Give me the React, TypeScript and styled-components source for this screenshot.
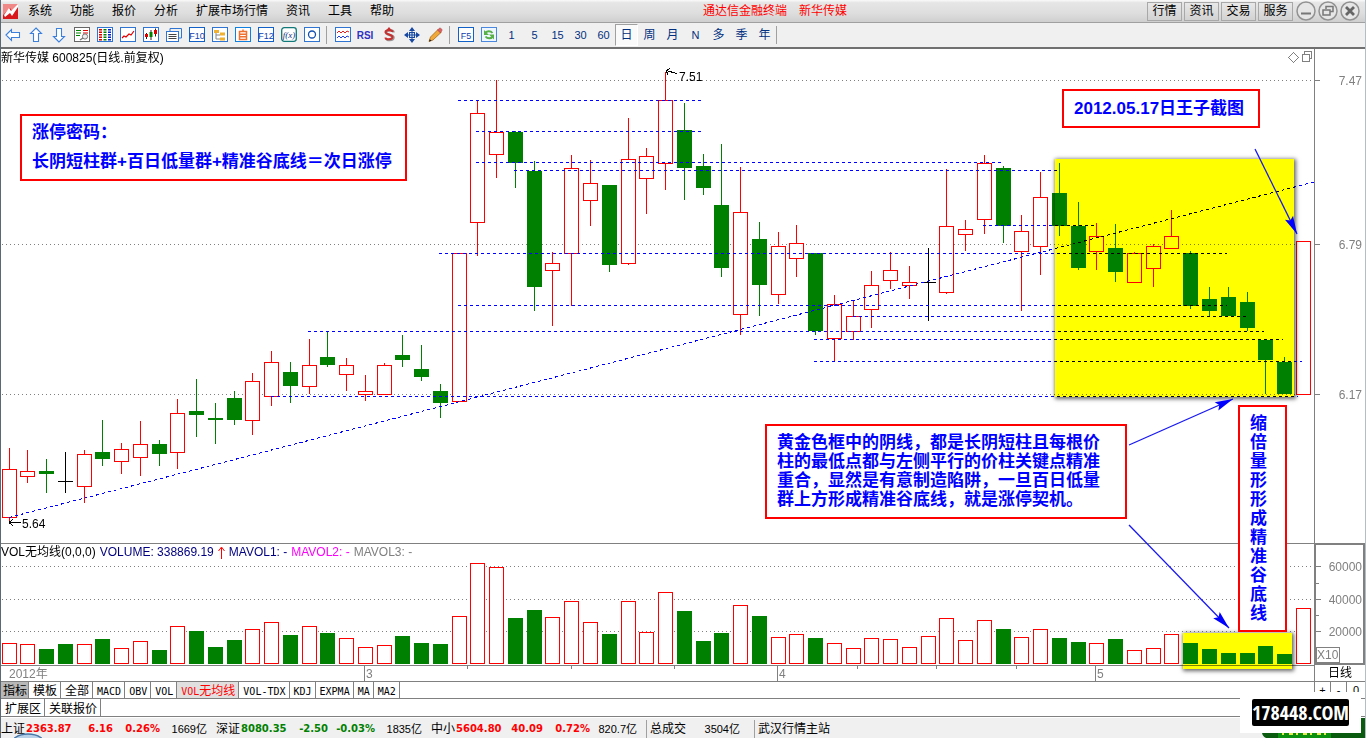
import React from "react";
import styled, { createGlobalStyle, css } from "styled-components";

const GRAY = "#808080";
const RED = "#ff0000";
const GREEN = "#008000";
const BLUE = "#0000ff";
const NAVY = "#003080";
const SANS = '"Liberation Sans", "Noto Sans CJK SC", sans-serif';

const GlobalStyle = createGlobalStyle`
  * { box-sizing: border-box; }
  body { margin: 0; background: #fff; font: 12px/16px ${SANS}; color: #000; }
  button { font: inherit; color: inherit; background: none; border: 0; padding: 0; margin: 0; white-space: nowrap; }
  svg { display: block; }
`;

/* ---------- data ---------- */

type Kind = "R" | "G" | "K";
/* x, high, body top, body bottom, low, kind, volume top */
type Bar = [number, number, number, number, number, Kind, number];

const BARS: Bar[] = [
  [9, 448, 469, 517, 521, "R", 643],
  [27, 450, 471, 476, 483, "R", 644],
  [46, 459, 471, 474, 493, "G", 649],
  [65, 452, 481, 482, 493, "K", 644],
  [84, 450, 454, 486, 503, "R", 644],
  [102, 420, 452, 459, 466, "G", 639],
  [121, 443, 449, 461, 474, "R", 648],
  [140, 421, 444, 457, 476, "R", 641],
  [159, 440, 444, 454, 466, "G", 650],
  [177, 399, 413, 452, 469, "R", 626],
  [196, 379, 411, 415, 437, "G", 631],
  [215, 403, 418, 420, 444, "G", 647],
  [234, 391, 398, 420, 425, "G", 640],
  [252, 373, 381, 420, 435, "R", 629],
  [271, 351, 362, 396, 406, "R", 622],
  [290, 362, 372, 386, 403, "G", 635],
  [309, 339, 365, 386, 394, "R", 626],
  [327, 331, 357, 365, 367, "G", 633],
  [346, 358, 365, 374, 391, "R", 638],
  [365, 375, 391, 394, 401, "R", 647],
  [384, 363, 365, 394, 395, "R", 645],
  [402, 335, 355, 360, 367, "G", 636],
  [421, 345, 369, 377, 381, "G", 643],
  [440, 384, 391, 403, 418, "G", 644],
  [459, 253, 253, 401, 402, "R", 616],
  [477, 101, 113, 222, 256, "R", 563],
  [496, 80, 132, 154, 178, "R", 567],
  [515, 131, 132, 163, 188, "G", 618],
  [534, 161, 171, 287, 311, "G", 610],
  [552, 252, 263, 270, 326, "R", 617],
  [571, 155, 168, 253, 306, "R", 601],
  [590, 160, 183, 200, 226, "R", 622],
  [609, 185, 185, 265, 272, "G", 634],
  [628, 118, 159, 263, 265, "R", 601],
  [646, 148, 156, 178, 214, "R", 632],
  [665, 72, 100, 163, 190, "R", 592],
  [684, 103, 130, 168, 200, "G", 611],
  [703, 154, 166, 188, 195, "G", 641],
  [721, 144, 205, 268, 277, "G", 633],
  [740, 167, 212, 314, 335, "R", 605],
  [759, 222, 239, 285, 316, "G", 616],
  [778, 232, 246, 294, 304, "R", 637],
  [796, 225, 243, 258, 277, "R", 634],
  [815, 253, 253, 331, 335, "G", 638],
  [834, 295, 304, 338, 361, "R", 643],
  [853, 300, 316, 331, 340, "R", 648],
  [871, 271, 285, 309, 328, "R", 638],
  [890, 252, 270, 280, 289, "R", 639],
  [909, 266, 282, 285, 299, "R", 647],
  [928, 248, 282, 283, 321, "K", 636],
  [946, 169, 226, 292, 294, "R", 618],
  [965, 220, 229, 234, 251, "R", 640],
  [984, 155, 163, 219, 234, "R", 620],
  [1003, 166, 168, 226, 243, "G", 629],
  [1021, 215, 231, 251, 311, "R", 637],
  [1040, 172, 197, 246, 275, "R", 629],
  [1059, 163, 193, 226, 236, "G", 638],
  [1078, 202, 226, 268, 270, "G", 642],
  [1096, 223, 236, 251, 270, "R", 643],
  [1115, 224, 248, 272, 282, "G", 639],
  [1134, 252, 253, 282, 283, "R", 650],
  [1153, 244, 246, 268, 287, "R", 648],
  [1171, 210, 236, 248, 249, "R", 634],
  [1190, 251, 253, 306, 309, "G", 643],
  [1209, 287, 299, 311, 316, "G", 649],
  [1228, 287, 297, 316, 316, "G", 653],
  [1247, 292, 302, 328, 331, "G", 653],
  [1265, 340, 340, 360, 394, "G", 646],
  [1284, 357, 362, 394, 394, "G", 654],
  [1303, 241, 241, 394, 395, "R", 608],
];

/* y, x from, x to */
const LEVELS: [number, number, number][] = [
  [100, 458, 702], [131, 476, 702], [162, 476, 1001], [170, 514, 1057],
  [225, 983, 1094], [253, 439, 1227], [305, 458, 1227], [316, 853, 1246],
  [331, 308, 1264], [339, 814, 1283], [361, 814, 1302], [396, 271, 1298],
];

const MENUS = ["系统", "功能", "报价", "分析", "扩展市场行情", "资讯", "工具", "帮助"];
const LINKS = ["行情", "资讯", "交易", "服务"];
const PERIODS = ["1", "5", "15", "30", "60", "日", "周", "月", "N", "多", "季", "年"];
const INDICATORS = ["MACD", "OBV", "VOL", "VOL无均线", "VOL-TDX", "KDJ", "EXPMA", "MA", "MA2"];
const QUOTES = [
  { name: "上证", price: "2363.87", change: "6.16", pct: "0.26%", amount: "1669亿", up: true },
  { name: "深证", price: "8080.35", change: "-2.50", pct: "-0.03%", amount: "1835亿", up: false },
  { name: "中小", price: "5604.80", change: "40.09", pct: "0.72%", amount: "820.7亿", up: true },
];

/* ---------- window chrome ---------- */

const Window = styled.div`
  position: relative;
  min-height: 100vh;
  display: flex;
  flex-direction: column;
  overflow: hidden;
  background: #fff;
  border-left: 1px solid #5b6876;
  border-right: 1px solid #b4bcc8;
`;

const MenuBar = styled.header`
  display: flex;
  align-items: center;
  height: 23px;
  background: linear-gradient(#fafafa, #e6e6e6 12%, #dedede 60%, #cfcfcf);
  border-bottom: 1px solid #a0a0a0;
`;

const MenuList = styled.nav`
  display: flex;
  align-items: center;
  padding-left: 1px;
`;

const MenuItem = styled.button`
  padding: 0 9px;
  line-height: 22px;
`;

const Caption = styled.h1`
  flex: 1;
  display: flex;
  justify-content: center;
  gap: 12px;
  margin: 0;
  font-size: 12px;
  font-weight: 400;
  color: ${RED};
`;

const LinkList = styled.div`
  display: flex;
  gap: 2px;
`;

const LinkButton = styled.button`
  width: 35px;
  height: 19px;
  line-height: 16px;
  border: 1px solid #a8a8a8;
  background: linear-gradient(#e8e8e8, #d2d2d2);
`;

const WindowButtons = styled.div`
  display: flex;
  gap: 2px;
  padding: 0 5px 0 3px;
`;

const ToolBar = styled.div`
  display: flex;
  align-items: center;
  height: 26px;
  background: #f0f0f0;
  border-bottom: 2px solid #707070;
`;

const ToolButton = styled.button<{ $on?: boolean }>`
  width: 23px;
  height: 22px;
  display: grid;
  place-items: center;
  color: ${NAVY};
  font-size: 11px;
  ${(p) =>
    p.$on &&
    css`
      background: #fafafa;
      border: 1px solid;
      border-color: #a0a0a0 #fff #fff #a0a0a0;
    `}
`;

const PeriodButton = styled(ToolButton)`
  font-size: 12px;
`;

const ToolSeparator = styled.i`
  width: 1px;
  height: 18px;
  margin: 0 4px 0 3px;
  background: #a0a0a0;
`;

const ToolEnd = styled(ToolSeparator)`
  margin: 0;
`;

/* ---------- chart ---------- */

const ChartArea = styled.main`
  position: relative;
  isolation: isolate;
  display: grid;
  grid-template-columns: minmax(0, 1fr) 51px;
  background: #fff;
`;

const Pane = styled.section<{ $height: number; $ruled?: boolean }>`
  display: grid;
  height: ${(p) => p.$height}px;
  overflow: hidden;
  border-top: ${(p) => (p.$ruled ? `1px solid ${GRAY}` : "0")};
  & > * {
    grid-area: 1 / 1;
    min-width: 0;
  }
`;

const Drawing = styled.svg`
  width: 100%;
  height: 100%;
  shape-rendering: crispEdges;
  font: 12px ${SANS};
`;

const PaneTitle = styled.h2<{ $height: number }>`
  display: flex;
  align-items: center;
  gap: 4px;
  height: ${(p) => p.$height}px;
  margin: 0;
  font-size: 12px;
  font-weight: 400;
  white-space: pre;
  z-index: 1;
`;

const Series = styled.span<{ $color: string }>`
  color: ${(p) => p.$color};
`;

const AxisPane = styled(Pane)`
  border-left: 1px solid ${GRAY};
`;

const VolumeAxis = styled(Pane)`
  border: 2px solid ${GRAY};
`;

const Factor = styled.span`
  align-self: end;
  justify-self: start;
  width: 24px;
  line-height: 14px;
  border: 1px solid ${GRAY};
  color: ${GRAY};
`;

const PeriodCell = styled.div`
  height: 16px;
  border-left: 1px solid ${GRAY};
  text-align: center;
`;

const Highlight = styled.div<{ $x: number; $y: number; $w: number; $h: number }>`
  position: absolute;
  left: ${(p) => p.$x}px;
  top: ${(p) => p.$y}px;
  width: ${(p) => p.$w}px;
  height: ${(p) => p.$h}px;
  background: #ff0;
  box-shadow: 1px 1px 4px 1px rgba(0, 0, 0, 0.6);
  mix-blend-mode: multiply;
`;

const Note = styled.p<{ $x: number; $y: number; $w: number; $leading: number; $pad: string }>`
  position: absolute;
  left: ${(p) => p.$x}px;
  top: ${(p) => p.$y}px;
  width: ${(p) => p.$w}px;
  margin: 0;
  padding: ${(p) => p.$pad};
  border: 2px solid ${RED};
  background: #fff;
  color: ${BLUE};
  font-size: 17px;
  font-weight: 700;
  line-height: ${(p) => p.$leading}px;
  white-space: nowrap;
  z-index: 2;
`;

const ColumnNote = styled(Note)`
  white-space: normal;
`;

const Arrows = styled.svg`
  position: absolute;
  inset: 0;
  width: 100%;
  height: 100%;
  z-index: 3;
  pointer-events: none;
`;

/* ---------- bottom ---------- */

const TabRow = styled.div<{ $height: number }>`
  display: flex;
  height: ${(p) => p.$height}px;
  border-top: 1px solid ${GRAY};
`;

const Tab = styled.button<{ $state?: "pressed" | "current" }>`
  padding: 0 3px 0 4px;
  border-right: 1px solid ${GRAY};
  font: 12px/16px "Noto Sans CJK SC", sans-serif;
  ${(p) => p.$state === "pressed" && "background: #b8b8b8; padding: 0 1px 0 2px;"}
  ${(p) => p.$state === "current" && "background: #e0e0e0; color: #ff0000;"}
`;

const Mono = styled.span`
  font-family: "DejaVu Sans Mono", monospace;
  font-size: 10px;
`;

const ZoomCells = styled.div`
  display: grid;
  grid-template-columns: 16px 16px 18px;
  margin-left: auto;
  border-left: 1px solid ${GRAY};
`;

const ZoomCell = styled.button`
  border-right: 1px solid ${GRAY};
  line-height: 16px;
  font-size: 11px;
  &:last-child {
    border-right: 0;
  }
`;

const StatusBar = styled.footer`
  flex: 1;
  display: flex;
  min-height: 22px;
  padding-top: 3px;
  line-height: 18px;
  white-space: nowrap;
  border-top: 1px solid ${GRAY};
  background: linear-gradient(#fff 0 1px, #f0f0f0 1px);
`;

const Quote = styled.div`
  display: grid;
  grid-template-columns: 25px 46px 41px 47px 47px;
  width: 215px;
`;

const Figure = styled.b<{ $up: boolean }>`
  font: 700 10px/18px "DejaVu Sans", sans-serif;
  color: ${(p) => (p.$up ? RED : GREEN)};
  & + & {
    text-align: right;
  }
`;

const Amount = styled.span`
  font-size: 11px;
  text-align: right;
`;

const StatusCell = styled.div<{ $width: number }>`
  display: flex;
  justify-content: space-between;
  width: ${(p) => p.$width}px;
  padding: 0 14px 0 3px;
  border-left: 1px solid #a0a0a0;
`;

const Orb = styled.svg`
  position: absolute;
  left: 13px;
  bottom: 0;
`;

const Ticker = styled.svg`
  position: absolute;
  right: 0;
  bottom: 0;
`;

const Watermark = styled.div`
  position: absolute;
  right: 4px;
  bottom: 5px;
  display: grid;
  place-items: center;
  width: 121px;
  height: 41px;
  background: #fff;
`;

const Stamp = styled.span`
  border-radius: 2px;
  background: #000;
  color: #fff;
  font: 700 20px/27px "Liberation Sans Narrow", "Open Sans Condensed", "Roboto Condensed", "DejaVu Sans Condensed", "Liberation Sans", sans-serif;
`;

/* ---------- icons ---------- */

const Icon = ({ children, w = 16 }: { children: React.ReactNode; w?: number }) => (
  <svg width={w} height="16" viewBox={`0 0 ${w} 16`} fill="none" aria-hidden="true">
    {children}
  </svg>
);

const Frame = ({ c = "#2f74d0" }: { c?: string }) => (
  <rect x=".5" y=".5" width="15" height="14" fill="#fff" stroke={c} />
);

const Boxed = ({ text }: { text: string }) => (
  <Icon>
    <Frame c="#1060c8" />
    <text x="8" y="12" fontSize="9" textAnchor="middle" fill="#1040b0" fontFamily="Liberation Sans, sans-serif">
      {text}
    </text>
  </Icon>
);

const arrowPath = "M1 8 6.5 2.5V5.5H14.5V10.5H6.5V13.5Z";
const ArrowIcon = ({ turn }: { turn: number }) => (
  <Icon>
    <path d={arrowPath} transform={`rotate(${turn} 8 8)`} fill="#fff" stroke="#3c80dc" strokeWidth="1.1" />
  </Icon>
);

const TOOLS_A: [string, React.ReactNode][] = [
  ["后退", <ArrowIcon turn={0} />],
  ["上一个", <ArrowIcon turn={90} />],
  ["下一个", <ArrowIcon turn={-90} />],
  ["自选", (
    <Icon>
      <Frame c="#666" />
      <path d="M2 3.5h5M2 6h5M2 8.5h4" stroke="#008000" strokeWidth="1.2" />
      <path d="M9 3.5h5M9 6h5" stroke="#e00000" strokeWidth="1.2" />
      <circle cx="11" cy="9.5" r="2.6" fill="#eee" stroke="#777" />
      <path d="m9 11-3 2" stroke="#777" strokeWidth="1.5" />
    </Icon>
  )],
  ["报价表", (
    <Icon>
      <Frame />
      <path d="M3.5 2v12" stroke="#e00000" strokeWidth="3" strokeDasharray="1.5 1" />
      <path d="M8 2v12" stroke="#008000" strokeWidth="3" strokeDasharray="1.5 1" />
      <path d="M12.5 2v12" stroke="#0020d0" strokeWidth="3" strokeDasharray="1.5 1" />
    </Icon>
  )],
  ["分时", <Icon><Frame /><path d="M2 11l2-2 2 1 3-3 2 1 3-4" stroke="#e00000" strokeWidth="1.2" /></Icon>],
  ["K线", (
    <Icon>
      <Frame />
      <path d="M3.5 6v6M8 3v10M12.5 1.5v8" stroke="#222" />
      <path d="M2 7h3v3H2zM11 3h3v4h-3z" fill="#e00000" />
      <path d="M6.5 5h3v5h-3z" fill="#008000" />
    </Icon>
  )],
  ["多窗口", (
    <Icon>
      <path d="M4 4V1.5h11.5V11H13" stroke="#2f74d0" />
      <rect x=".5" y="4.5" width="12" height="10" fill="#fff" stroke="#2f74d0" />
      <path d="M2.5 7.5h8M2.5 9.5h8M2.5 11.5h8" stroke="#444" />
    </Icon>
  )],
  ["F10", <Boxed text="F10" />],
  ["板块", (
    <Icon>
      <Frame />
      <path d="M4 5v7h4M4 8h4" stroke="#888" />
      <path d="M2 3h5v3H2zM8 5.5h5v3H8zM8 10.5h5v3H8z" fill="#f0b030" />
    </Icon>
  )],
  ["自选股", (
    <Icon>
      <Frame c="#1080e0" />
      <path d="M4.5 4.5h7v8h-7zM4.5 7.2h7M4.5 9.8h7M8 2.5v2" stroke="#f07030" strokeWidth="1.5" />
    </Icon>
  )],
  ["F12", <Boxed text="F12" />],
  ["公式", (
    <Icon>
      <rect x=".7" y=".7" width="14.6" height="13.6" rx="2.5" fill="#fff" stroke="#107878" strokeWidth="1.3" />
      <text x="8" y="11" fontSize="9" fontStyle="italic" textAnchor="middle" fill="#103080" fontFamily="Liberation Serif, serif">f(x)</text>
    </Icon>
  )],
  ["圆", <Icon><Frame /><circle cx="8" cy="7.5" r="3.5" stroke="#1050b0" strokeWidth="1.3" /></Icon>],
];

const TOOLS_B: [string, React.ReactNode][] = [
  ["叠加", (
    <Icon>
      <Frame />
      <path d="M2 6l2-2 2 2 2-2 2 2 2-2 2 1" stroke="#e02020" />
      <path d="M2 11l2-2 2 2 2-2 2 2 2-2 2 1" stroke="#2040e0" />
    </Icon>
  )],
  ["RSI", (
    <Icon w={18}>
      <text x="8" y="12" fontSize="10" fontWeight="700" textAnchor="middle" fill="#3030c0" fontFamily="Liberation Sans, sans-serif">RSI</text>
    </Icon>
  )],
  ["资金", (
    <Icon>
      <path d="M12.5 5.5C12.5 2.5 5 2.5 5 5.5S12.5 7.5 12.5 10.5 5 14 5 11" stroke="#999" strokeWidth="2.5" />
      <path d="M11.5 5C11.5 2.5 4.5 2.5 4.5 5S11.5 7.5 11.5 10 4.5 13.5 4.5 10.5" stroke="#c83030" strokeWidth="2" />
      <path d="M5 3.5 8 0l3 3.5z" fill="#c83030" />
    </Icon>
  )],
  ["移动", (
    <Icon>
      <path d="M8 0 11 4H5zM8 16 5 12h6zM0 8l4-3v6zM16 8l-4 3V5z" fill="#1848a0" />
      <rect x="5.5" y="5.5" width="5" height="5" fill="#c8dcf8" stroke="#1848a0" />
      <path d="M8 3v10M3 8h10" stroke="#1848a0" />
    </Icon>
  )],
  ["画线", (
    <Icon>
      <path d="m2 14.5 1.5-4.5L11 2.5 14 5.5 6 13z" fill="#f0a838" stroke="#a86818" strokeWidth=".8" />
      <path d="m10.5 3 1.5-1.5c1.5-1.2 4 1 2.5 2.8L13.5 6z" fill="#e06060" stroke="#a04040" strokeWidth=".6" />
      <path d="m2 14.5.8-2.3 1.8 1.5z" fill="#222" />
    </Icon>
  )],
];

const TOOLS_C: [string, React.ReactNode][] = [
  ["F5", <Boxed text="F5" />],
  ["刷新", (
    <Icon>
      <rect x=".5" y=".5" width="15" height="14" fill="#eef6ff" stroke="#4a88e0" />
      <path d="M4 6.5C5.5 3.5 9.5 3.5 11.5 6M12 9C10.5 12 6.5 12 4.5 9.5" stroke="#58b048" strokeWidth="2" />
      <path d="M3 3v5h5zM13 12.5V7.5H8z" fill="#58b048" />
    </Icon>
  )],
];

const ToolGroup = ({ items }: { items: [string, React.ReactNode][] }) => (
  <>
    {items.map(([name, icon]) => (
      <ToolButton key={name} aria-label={name}>
        {icon}
      </ToolButton>
    ))}
  </>
);

const RoundButton = ({ label, children }: { label: string; children: React.ReactNode }) => (
  <button aria-label={label}>
    <svg width="20" height="20" viewBox="0 0 20 20" fill="none">
      <circle cx="10" cy="10" r="9" fill="#e6e6e6" stroke="#929292" strokeWidth="1.5" />
      {children}
    </svg>
  </button>
);

/* ---------- chart drawings ---------- */

const colorOf = (k: Kind) => (k === "R" ? RED : k === "G" ? GREEN : "#000");

const GridLines = ({ ys }: { ys: number[] }) => (
  <>
    {ys.map((y) => (
      <line key={y} x1="2" x2="100%" y1={y + 0.5} y2={y + 0.5} stroke={GRAY} strokeDasharray="1 3" />
    ))}
  </>
);

const Candle = ({ bar }: { bar: Bar }) => {
  const [x, high, top, bottom, low, kind] = bar;
  const c = colorOf(kind);
  return (
    <g>
      <rect x={x} y={high} width="1" height={low - high} fill={c} />
      {kind === "R" ? (
        <rect x={x - 6.5} y={top + 0.5} width="14" height={bottom - top} fill="#fff" stroke={c} />
      ) : (
        <rect x={x - 7} y={top} width="15" height={bottom - top} fill={c} />
      )}
    </g>
  );
};

const PriceDrawing = () => (
  <Drawing>
    <g transform="translate(-1 -49)">
      <GridLines ys={[80, 244, 394]} />
      {BARS.map((b) => (
        <Candle key={b[0]} bar={b} />
      ))}
      {LEVELS.map(([y, x1, x2]) => (
        <line key={y} x1={x1} x2={x2} y1={y + 0.5} y2={y + 0.5} stroke={BLUE} strokeDasharray="3 3" />
      ))}
      <line x1="9" y1="517.5" x2="1314" y2="182" stroke={BLUE} strokeDasharray="3 3" />
      <path d="M9 522.5h12M9 522.5l4-3M9 522.5l4 3" stroke="#000" fill="none" />
      <text x="22" y="528">5.64</text>
      <path d="M666 70.5l11 3M666 70.5l4-2M666 70.5l2 4" stroke="#000" fill="none" />
      <text x="679" y="81">7.51</text>
      <g stroke={GRAY} fill="none">
        <path d="M1288.5 57.5l5-5 5 5-5 5z" />
        <path d="M1302.5 54.5h7v7h-7zM1304.5 54v-2.5h7v7H1310" />
      </g>
    </g>
  </Drawing>
);

const VolumeDrawing = () => (
  <Drawing>
    <g transform="translate(-1 -544)">
      <GridLines ys={[566, 599, 631]} />
      {BARS.map(([x, , , , , kind, top]) => {
        const hollow = kind === "R" || x === 928;
        return hollow ? (
          <rect key={x} x={x - 6.5} y={top + 0.5} width="14" height={663 - top} fill="#fff" stroke={RED} />
        ) : (
          <rect key={x} x={x - 7} y={top} width="15" height={664 - top} fill={GREEN} />
        );
      })}
    </g>
  </Drawing>
);

const DateDrawing = () => (
  <Drawing>
    <g transform="translate(-1 -666)" fill={GRAY}>
      {[467, 571, 674, 857, 936, 1016].map((x) => (
        <rect key={x} x={x} y="666" width="1" height="3" />
      ))}
      <text x="9" y="678">2012年</text>
      {([[364, "3"], [777, "4"], [1095, "5"]] as [number, string][]).map(([x, m]) => (
        <g key={m}>
          <rect x={x} y="666" width="1" height="15" />
          <text x={x + 2} y="678">{m}</text>
        </g>
      ))}
    </g>
  </Drawing>
);

const AxisLabels = ({ labels, origin, right }: { labels: [number, string][]; origin: number; right: number }) => (
  <g fill={GRAY} textAnchor="end">
    {labels.map(([y, t]) => (
      <g key={t}>
        <rect x="0" y={y - origin} width="5" height="1" />
        <text x={right} y={y - origin + 5}>{t}</text>
      </g>
    ))}
  </g>
);

const Arrow = ({ from, to }: { from: [number, number]; to: [number, number] }) => {
  const angle = (Math.atan2(to[1] - from[1], to[0] - from[0]) * 180) / Math.PI;
  return (
    <g>
      <line x1={from[0]} y1={from[1]} x2={to[0]} y2={to[1]} stroke="#1818f0" strokeWidth="1.3" />
      <path d="M0 0 -18 -4.5 -15 0 -18 4.5Z" fill={BLUE} transform={`translate(${to[0]} ${to[1]}) rotate(${angle})`} />
    </g>
  );
};

/* ---------- page ---------- */

const splitLatin = (s: string) =>
  s.split(/([A-Z0-9-]+)/).filter(Boolean).map((part) =>
    /^[A-Z0-9-]/.test(part) ? <Mono key={part}>{part}</Mono> : part
  );

export default function App() {
  return (
    <>
      <GlobalStyle />
      <Window>
        <MenuBar>
          <MenuList>
            <svg width="17" height="16" viewBox="0 0 17 16" aria-hidden="true">
              <rect x="1" y="1" width="15" height="15" fill="#d8181c" />
              <path d="M1 1h15v1L10 8 8 5 1 12z" fill="#f08888" />
              <path d="M2 12 7 5l2 3 7-7v3l-6 9-2-3-5 4z" fill="#fff" />
            </svg>
            {MENUS.map((m) => (
              <MenuItem key={m}>{m}</MenuItem>
            ))}
          </MenuList>
          <Caption>
            <span>通达信金融终端</span>
            <span>新华传媒</span>
          </Caption>
          <LinkList>
            {LINKS.map((l) => (
              <LinkButton key={l}>{l}</LinkButton>
            ))}
          </LinkList>
          <WindowButtons>
            <RoundButton label="最小化">
              <path d="M5 12.5h10" stroke="#777" strokeWidth="2" />
            </RoundButton>
            <RoundButton label="还原">
              <path d="M8 8V5.5h7v5h-2.5M5 9h7v5H5z" stroke="#777" strokeWidth="1.5" />
            </RoundButton>
            <RoundButton label="关闭">
              <path d="m6 6 8 8M14 6l-8 8" stroke="#666" strokeWidth="2.8" />
            </RoundButton>
          </WindowButtons>
        </MenuBar>

        <ToolBar>
          <ToolGroup items={TOOLS_A} />
          <ToolSeparator />
          <ToolGroup items={TOOLS_B} />
          <ToolSeparator />
          <ToolGroup items={TOOLS_C} />
          {PERIODS.map((p) =>
            /[A-Z0-9]/.test(p) ? (
              <ToolButton key={p}>{p}</ToolButton>
            ) : (
              <PeriodButton key={p} $on={p === "日"}>{p}</PeriodButton>
            )
          )}
          <ToolEnd />
        </ToolBar>

        <ChartArea>
          <Pane $height={494}>
            <PriceDrawing />
            <PaneTitle $height={18}>新华传媒 600825(日线.前复权)</PaneTitle>
          </Pane>
          <AxisPane $height={494}>
            <Drawing>
              <AxisLabels origin={49} right={47} labels={[[80, "7.47"], [244, "6.79"], [394, "6.17"]]} />
            </Drawing>
          </AxisPane>

          <Pane $height={122} $ruled>
            <VolumeDrawing />
            <PaneTitle $height={16}>
              <span>VOL无均线(0,0,0)</span>
              <Series $color="#000080">VOLUME: 338869.19</Series>
              <svg width="7" height="13" viewBox="0 0 7 13" aria-hidden="true">
                <path d="M3.5 13V2M.5 5l3-4 3 4" stroke={RED} fill="none" />
              </svg>
              <Series $color="#000080">MAVOL1: -</Series>
              <Series $color="#ff00ff">MAVOL2: -</Series>
              <Series $color={GRAY}>MAVOL3: -</Series>
            </PaneTitle>
          </Pane>
          <VolumeAxis $height={122}>
            <Drawing>
              <AxisLabels origin={545} right={46} labels={[[566, "60000"], [599, "40000"], [631, "20000"]]} />
              <path d="M0 38.5h3M0 70.5h3" stroke={GRAY} />
            </Drawing>
            <Factor>X10</Factor>
          </VolumeAxis>

          <Pane $height={16} $ruled>
            <DateDrawing />
          </Pane>
          <PeriodCell>日线</PeriodCell>

          <Highlight $x={1054} $y={110} $w={239} $h={238} />
          <Highlight $x={1182} $y={584} $w={109} $h={36} />
          <Note $x={19} $y={65} $w={387} $leading={29} $pad="2px 10px 3px">
            涨停密码：
            <br />
            长阴短柱群+百日低量群+精准谷底线＝次日涨停
          </Note>
          <Note $x={1061} $y={40} $w={198} $leading={29} $pad="3px 10px">
            2012.05.17日王子截图
          </Note>
          <Note $x={764} $y={375} $w={362} $leading={19} $pad="7px 10px 8px">
            黄金色框中的阴线，都是长阴短柱且每根价
            <br />
            柱的最低点都与左侧平行的价柱关键点精准
            <br />
            重合，显然是有意制造陷阱，一旦百日低量
            <br />
            群上方形成精准谷底线，就是涨停契机。
          </Note>
          <ColumnNote $x={1237} $y={356} $w={49} $leading={19} $pad="7px 17px 7px 10px">
            缩倍量形形成精准谷底线
          </ColumnNote>
          <Arrows>
            <g transform="translate(-1 -49)">
              <Arrow from={[1255, 149]} to={[1297, 234]} />
              <Arrow from={[1129, 445]} to={[1233, 399]} />
              <Arrow from={[1129, 525]} to={[1229, 628]} />
            </g>
          </Arrows>
        </ChartArea>

        <TabRow $height={17}>
          <Tab $state="pressed">指标</Tab>
          <Tab>模板</Tab>
          <Tab>全部</Tab>
          {INDICATORS.map((t) => (
            <Tab key={t} $state={t === "VOL无均线" ? "current" : undefined}>
              {splitLatin(t)}
            </Tab>
          ))}
          <ZoomCells>
            <ZoomCell>+</ZoomCell>
            <ZoomCell>-</ZoomCell>
            <ZoomCell>0</ZoomCell>
          </ZoomCells>
        </TabRow>
        <TabRow $height={18}>
          <Tab>扩展区</Tab>
          <Tab>关联报价</Tab>
        </TabRow>

        <StatusBar>
          {QUOTES.map((q) => (
            <Quote key={q.name}>
              <span>{q.name}</span>
              <Figure $up={q.up}>{q.price}</Figure>
              <Figure $up={q.up}>{q.change}</Figure>
              <Figure $up={q.up}>{q.pct}</Figure>
              <Amount>{q.amount}</Amount>
            </Quote>
          ))}
          <StatusCell $width={108}>
            <span>总成交</span>
            <Amount>3504亿</Amount>
          </StatusCell>
          <StatusCell $width={108}>武汉行情主站</StatusCell>
        </StatusBar>

        <Orb width="28" height="5" viewBox="0 0 28 5" aria-hidden="true">
          <ellipse cx="14" cy="13" rx="18" ry="12" fill="#b8d0e8" stroke="#4878a8" strokeWidth="1.5" />
        </Orb>
        <Ticker width="103" height="20" viewBox="0 0 103 20" aria-hidden="true">
          <path d="M4 0h99v20H4q-4-2-4-6V4q0-3 4-4z" fill="#0a5a10" />
          <path d="M16 0h53v20H16z" fill="#0c9010" />
          <path d="M20 16h46" stroke="#e8e850" strokeWidth="2" strokeDasharray="2 5 4 3" />
        </Ticker>
        <Watermark>
          <Stamp>178448.COM</Stamp>
        </Watermark>
      </Window>
    </>
  );
}
